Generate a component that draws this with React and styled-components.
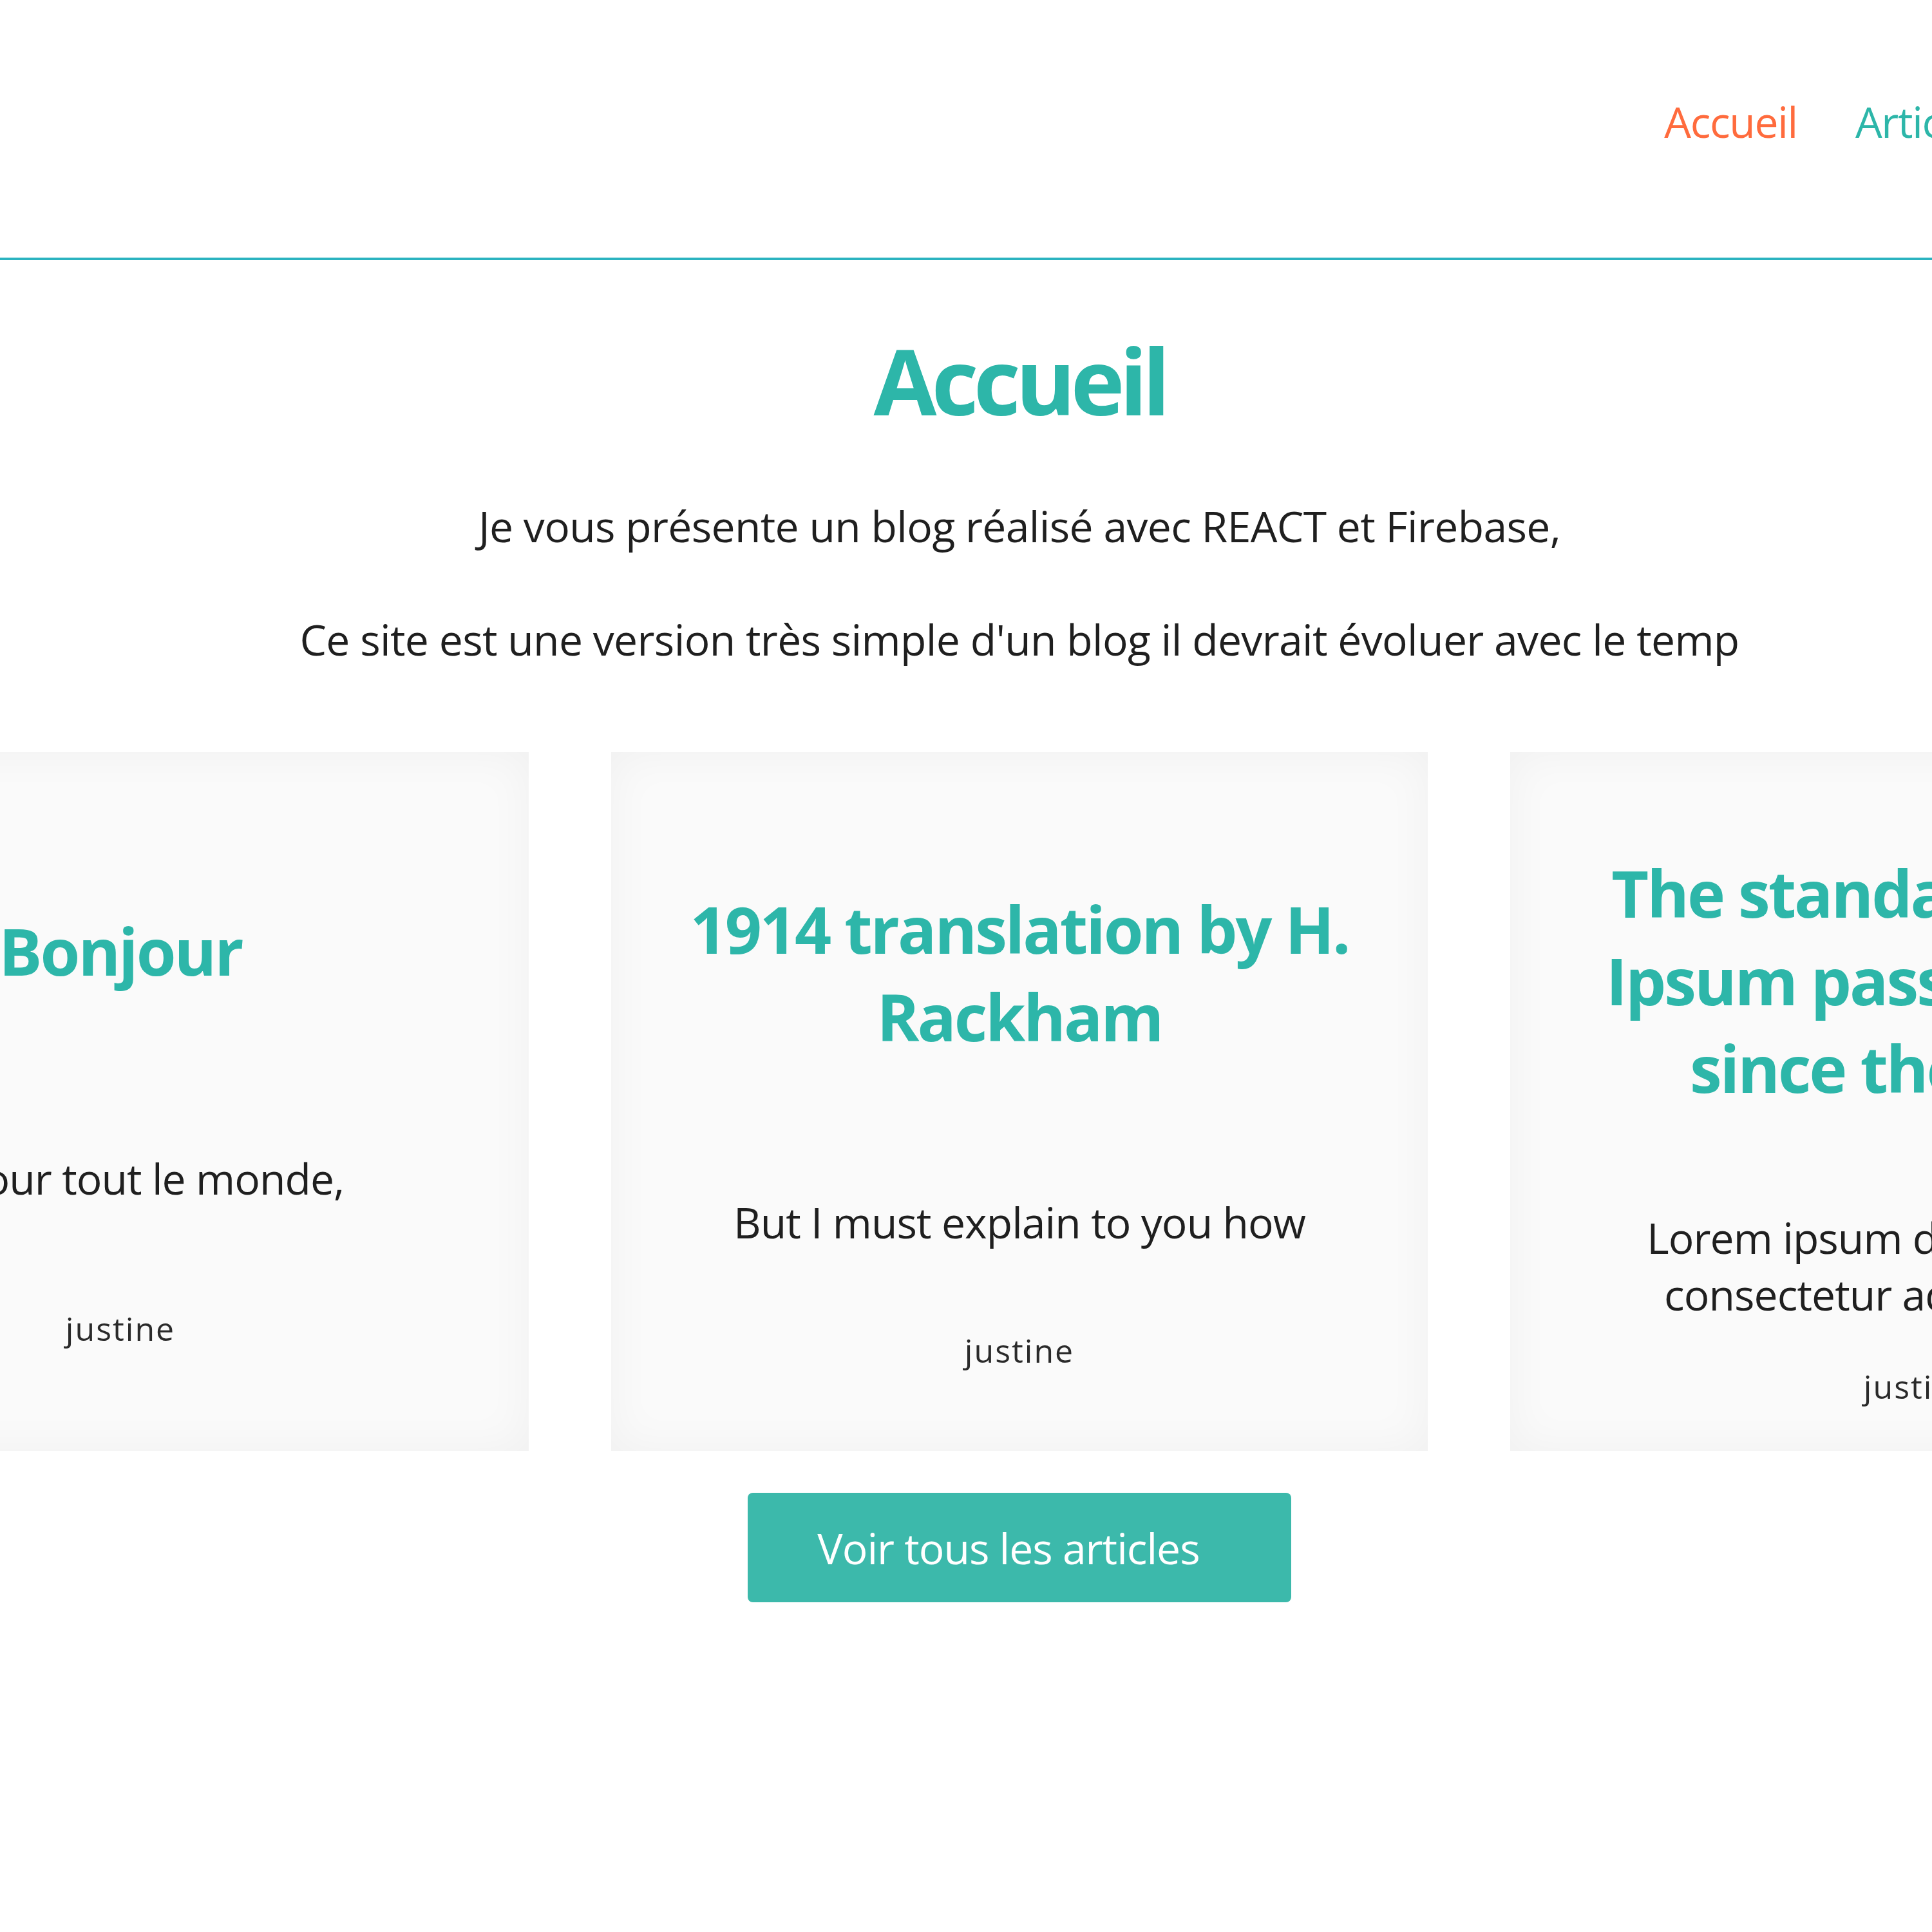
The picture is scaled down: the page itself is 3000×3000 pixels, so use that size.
import React from 'react';
import styled, { createGlobalStyle } from 'styled-components';

const colors = {
  teal: '#2db6a9',
  tealLine: '#2bb3c0',
  button: '#3cb9ab',
  orange: '#ff6b3d',
  text: '#1f1f1f'
};

const GlobalStyle = createGlobalStyle`
  html, body {
    margin: 0;
    padding: 0;
    background: #fff;
    overflow-x: hidden;
  }
  body {
    font-family: "Open Sans", "Noto Sans", sans-serif;
    color: ${colors.text};
  }
`;

const Page = styled.div`
  width: 3166px;
`;

const Header = styled.header`
  height: 404px;
  box-sizing: border-box;
  border-bottom: 4px solid ${colors.tealLine};
  display: flex;
  justify-content: flex-end;
  align-items: center;
  padding: 0 70px 24px 0;
`;

const Nav = styled.nav`
  display: flex;
  gap: 90px;
`;

const NavLink = styled.a`
  font-size: 66px;
  letter-spacing: -0.02em;
  color: ${(p) => (p.$active ? colors.orange : colors.teal)};
  text-decoration: none;
  cursor: pointer;
`;

const Main = styled.main`
  display: flex;
  flex-direction: column;
  align-items: center;
  padding-bottom: 400px;
`;

const Title = styled.h1`
  margin: 90px 0 0;
  font-size: 142px;
  line-height: 193px;
  font-weight: 700;
  letter-spacing: -0.055em;
  color: ${colors.teal};
`;

const Intro = styled.p`
  margin: 85px 0 0;
  font-size: 66px;
  line-height: 88px;
  letter-spacing: -0.01em;
  text-align: center;
  white-space: nowrap;
`;

const CardRow = styled.section`
  margin-top: 132px;
  width: 100%;
  display: flex;
  justify-content: center;
  gap: 128px;
`;

const Card = styled.article`
  flex: 0 0 1268px;
  height: 1085px;
  box-sizing: border-box;
  padding: 0 80px;
  background: #fafafa;
  box-shadow: inset 0 0 70px rgba(0, 0, 0, 0.045);
  display: flex;
  flex-direction: column;
  justify-content: space-evenly;
  align-items: center;
  text-align: center;
`;

const CardTitle = styled.h2`
  margin: 83px 0;
  font-size: 100px;
  line-height: 136px;
  font-weight: 700;
  letter-spacing: -0.03em;
  color: ${colors.teal};
`;

const CardText = styled.p`
  margin: 0;
  font-size: 66px;
  line-height: 88px;
  letter-spacing: -0.014em;
`;

const Author = styled.span`
  display: block;
  font-size: 50px;
  line-height: 66px;
  letter-spacing: 0.04em;
  color: #2a2a2a;
`;

const Button = styled.button`
  margin-top: 65px;
  width: 844px;
  height: 170px;
  padding: 0 34px 0 0;
  border: 0;
  border-radius: 8px;
  background: ${colors.button};
  color: #fff;
  font-family: inherit;
  font-size: 66px;
  letter-spacing: -0.015em;
  cursor: pointer;
`;

const articles = [
  {
    id: 1,
    title: 'Bonjour',
    text: 'Bonjour tout le monde,',
    author: 'justine'
  },
  {
    id: 2,
    title: '1914 translation by H. Rackham',
    text: 'But I must explain to you how',
    author: 'justine'
  },
  {
    id: 3,
    title: 'The standard Lorem Ipsum passage, used since the 1500s',
    text: 'Lorem ipsum dolor sit amet, consectetur adipiscing elit.',
    author: 'justine'
  }
];

const App = () => (
  <Page>
    <GlobalStyle />
    <Header>
      <Nav>
        <NavLink $active>Accueil</NavLink>
        <NavLink>Articles</NavLink>
      </Nav>
    </Header>
    <Main>
      <Title>Accueil</Title>
      <Intro>
        Je vous présente un blog réalisé avec REACT et Firebase,
        <br />
        <br />
        Ce site est une version très simple d'un blog il devrait évoluer avec le temp
      </Intro>
      <CardRow>
        {articles.map((article) => (
          <Card key={article.id}>
            <CardTitle>{article.title}</CardTitle>
            <CardText>{article.text}</CardText>
            <Author>{article.author}</Author>
          </Card>
        ))}
      </CardRow>
      <Button>Voir tous les articles</Button>
    </Main>
  </Page>
);

export default App;
